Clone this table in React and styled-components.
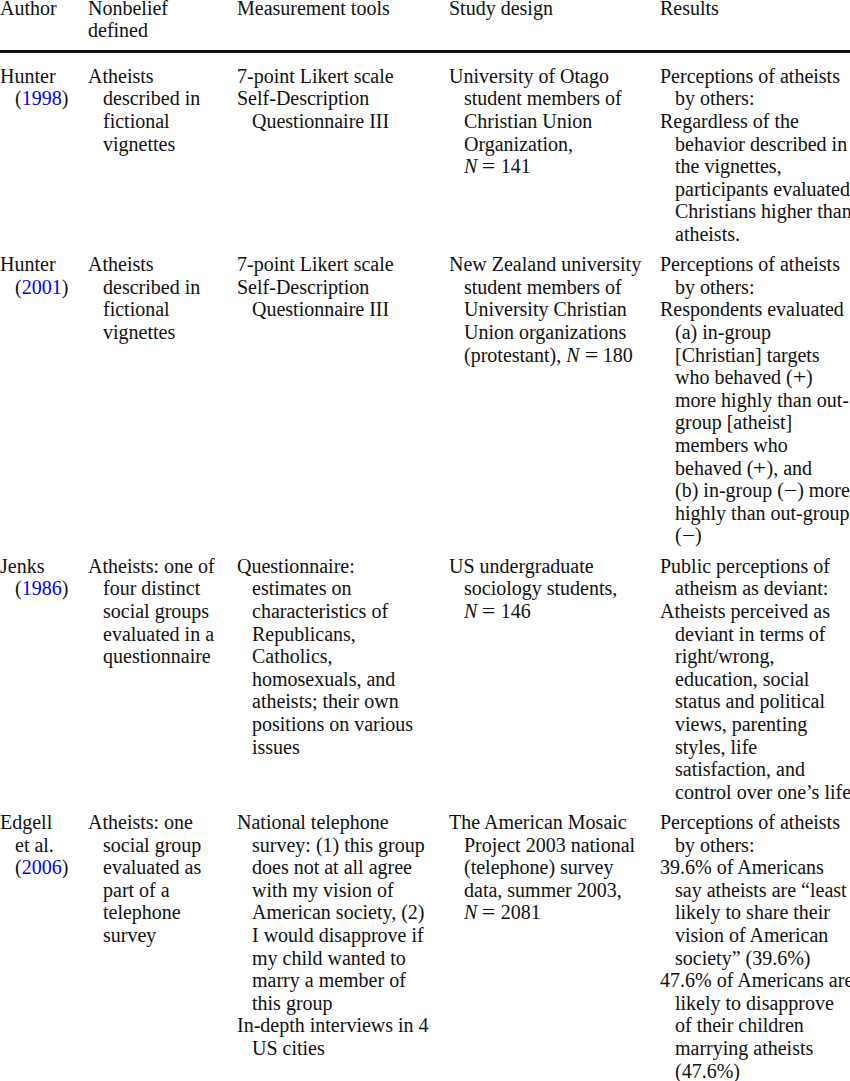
import React from 'react';
import styled, { createGlobalStyle } from 'styled-components';

const GlobalStyle = createGlobalStyle`
  html, body {
    margin: 0;
    padding: 0;
    background: #ffffff;
    overflow: hidden;
  }
  body {
    font-family: "Liberation Serif", "Times New Roman", serif;
    color: #111111;
  }
`;

const Table = styled.div`
  width: 850px;
  margin-top: -3.3px;
  font-size: 20px;
  line-height: 22.6px;
`;

const Row = styled.div`
  display: grid;
  grid-template-columns: 88px 149px 212px 211px 1fr;
  padding: ${props => (props.head ? '0 0 8.1px' : '3.9px 0')};
  border-bottom: ${props => (props.head ? '3px solid #111' : 'none')};
`;

const Body = styled.div`
  padding-top: 7.9px;
`;

const Cell = styled.div`
  white-space: nowrap;
`;

const Para = styled.div`
  display: flex;
  flex-direction: column;
`;

const Line = styled.span`
  display: block;
  padding-left: ${props => (props.indent ? '15px' : '0')};
`;

const Cite = styled.span`
  color: #0000ff;
`;

// math operators are set a little wider than text glyphs
const Op = styled.span`
  display: inline-block;
  margin: 0 ${props => props.space || '6px'};
  transform: scaleX(1.2);
`;

const Ni = () => <i>N</i>;
const Eq = () => <Op>=</Op>;
const Plus = () => <Op space="1px">+</Op>;
const Minus = () => <Op space="1px">{'\u2212'}</Op>;

const paragraphs = paras =>
  paras.map((lines, i) => (
    <Para key={i}>
      {lines.map((l, j) => (
        <Line key={j} indent={j > 0}>
          {l}
        </Line>
      ))}
    </Para>
  ));

const year = y => (
  <>
    (<Cite>{y}</Cite>)
  </>
);

const atheistsVignettes = [['Atheists', 'described in', 'fictional', 'vignettes']];
const likert = [['7-point Likert scale'], ['Self-Description', 'Questionnaire III']];

const rows = [
  {
    author: [['Hunter', year('1998')]],
    nonbelief: atheistsVignettes,
    tools: likert,
    design: [[
      'University of Otago',
      'student members of',
      'Christian Union',
      'Organization,',
      <><Ni /><Eq />141</>,
    ]],
    results: [
      ['Perceptions of atheists', 'by others:'],
      [
        'Regardless of the',
        'behavior described in',
        'the vignettes,',
        'participants evaluated',
        'Christians higher than',
        'atheists.',
      ],
    ],
  },
  {
    author: [['Hunter', year('2001')]],
    nonbelief: atheistsVignettes,
    tools: likert,
    design: [[
      'New Zealand university',
      'student members of',
      'University Christian',
      'Union organizations',
      <>(protestant), <Ni /><Eq />180</>,
    ]],
    results: [
      ['Perceptions of atheists', 'by others:'],
      [
        'Respondents evaluated',
        '(a) in-group',
        '[Christian] targets',
        <>who behaved (<Plus />)</>,
        'more highly than out-',
        'group [atheist]',
        'members who',
        <>behaved (<Plus />), and</>,
        <>(b) in-group (<Minus />) more</>,
        'highly than out-group',
        <>(<Minus />)</>,
      ],
    ],
  },
  {
    author: [['Jenks', year('1986')]],
    nonbelief: [[
      'Atheists: one of',
      'four distinct',
      'social groups',
      'evaluated in a',
      'questionnaire',
    ]],
    tools: [[
      'Questionnaire:',
      'estimates on',
      'characteristics of',
      'Republicans,',
      'Catholics,',
      'homosexuals, and',
      'atheists; their own',
      'positions on various',
      'issues',
    ]],
    design: [['US undergraduate', 'sociology students,', <><Ni /><Eq />146</>]],
    results: [
      ['Public perceptions of', 'atheism as deviant:'],
      [
        'Atheists perceived as',
        'deviant in terms of',
        'right/wrong,',
        'education, social',
        'status and political',
        'views, parenting',
        'styles, life',
        'satisfaction, and',
        'control over one\u2019s life',
      ],
    ],
  },
  {
    author: [['Edgell', 'et al.', year('2006')]],
    nonbelief: [[
      'Atheists: one',
      'social group',
      'evaluated as',
      'part of a',
      'telephone',
      'survey',
    ]],
    tools: [
      [
        'National telephone',
        'survey: (1) this group',
        'does not at all agree',
        'with my vision of',
        'American society, (2)',
        'I would disapprove if',
        'my child wanted to',
        'marry a member of',
        'this group',
      ],
      ['In-depth interviews in 4', 'US cities'],
    ],
    design: [[
      'The American Mosaic',
      'Project 2003 national',
      '(telephone) survey',
      'data, summer 2003,',
      <><Ni /><Eq />2081</>,
    ]],
    results: [
      ['Perceptions of atheists', 'by others:'],
      [
        '39.6% of Americans',
        'say atheists are \u201cleast',
        'likely to share their',
        'vision of American',
        'society\u201d (39.6%)',
      ],
      [
        '47.6% of Americans are',
        'likely to disapprove',
        'of their children',
        'marrying atheists',
        '(47.6%)',
      ],
    ],
  },
];

const headers = [['Author'], ['Nonbelief', 'defined'], ['Measurement tools'], ['Study design'], ['Results']];

export default function App() {
  return (
    <>
      <GlobalStyle />
      <Table>
        <Row head>
          {headers.map((h, i) => (
            <Cell key={i}>
              {h.map((l, j) => (
                <Line key={j}>{l}</Line>
              ))}
            </Cell>
          ))}
        </Row>
        <Body>
          {rows.map((r, i) => (
            <Row key={i}>
              <Cell>{paragraphs(r.author)}</Cell>
              <Cell>{paragraphs(r.nonbelief)}</Cell>
              <Cell>{paragraphs(r.tools)}</Cell>
              <Cell>{paragraphs(r.design)}</Cell>
              <Cell>{paragraphs(r.results)}</Cell>
            </Row>
          ))}
        </Body>
      </Table>
    </>
  );
}
